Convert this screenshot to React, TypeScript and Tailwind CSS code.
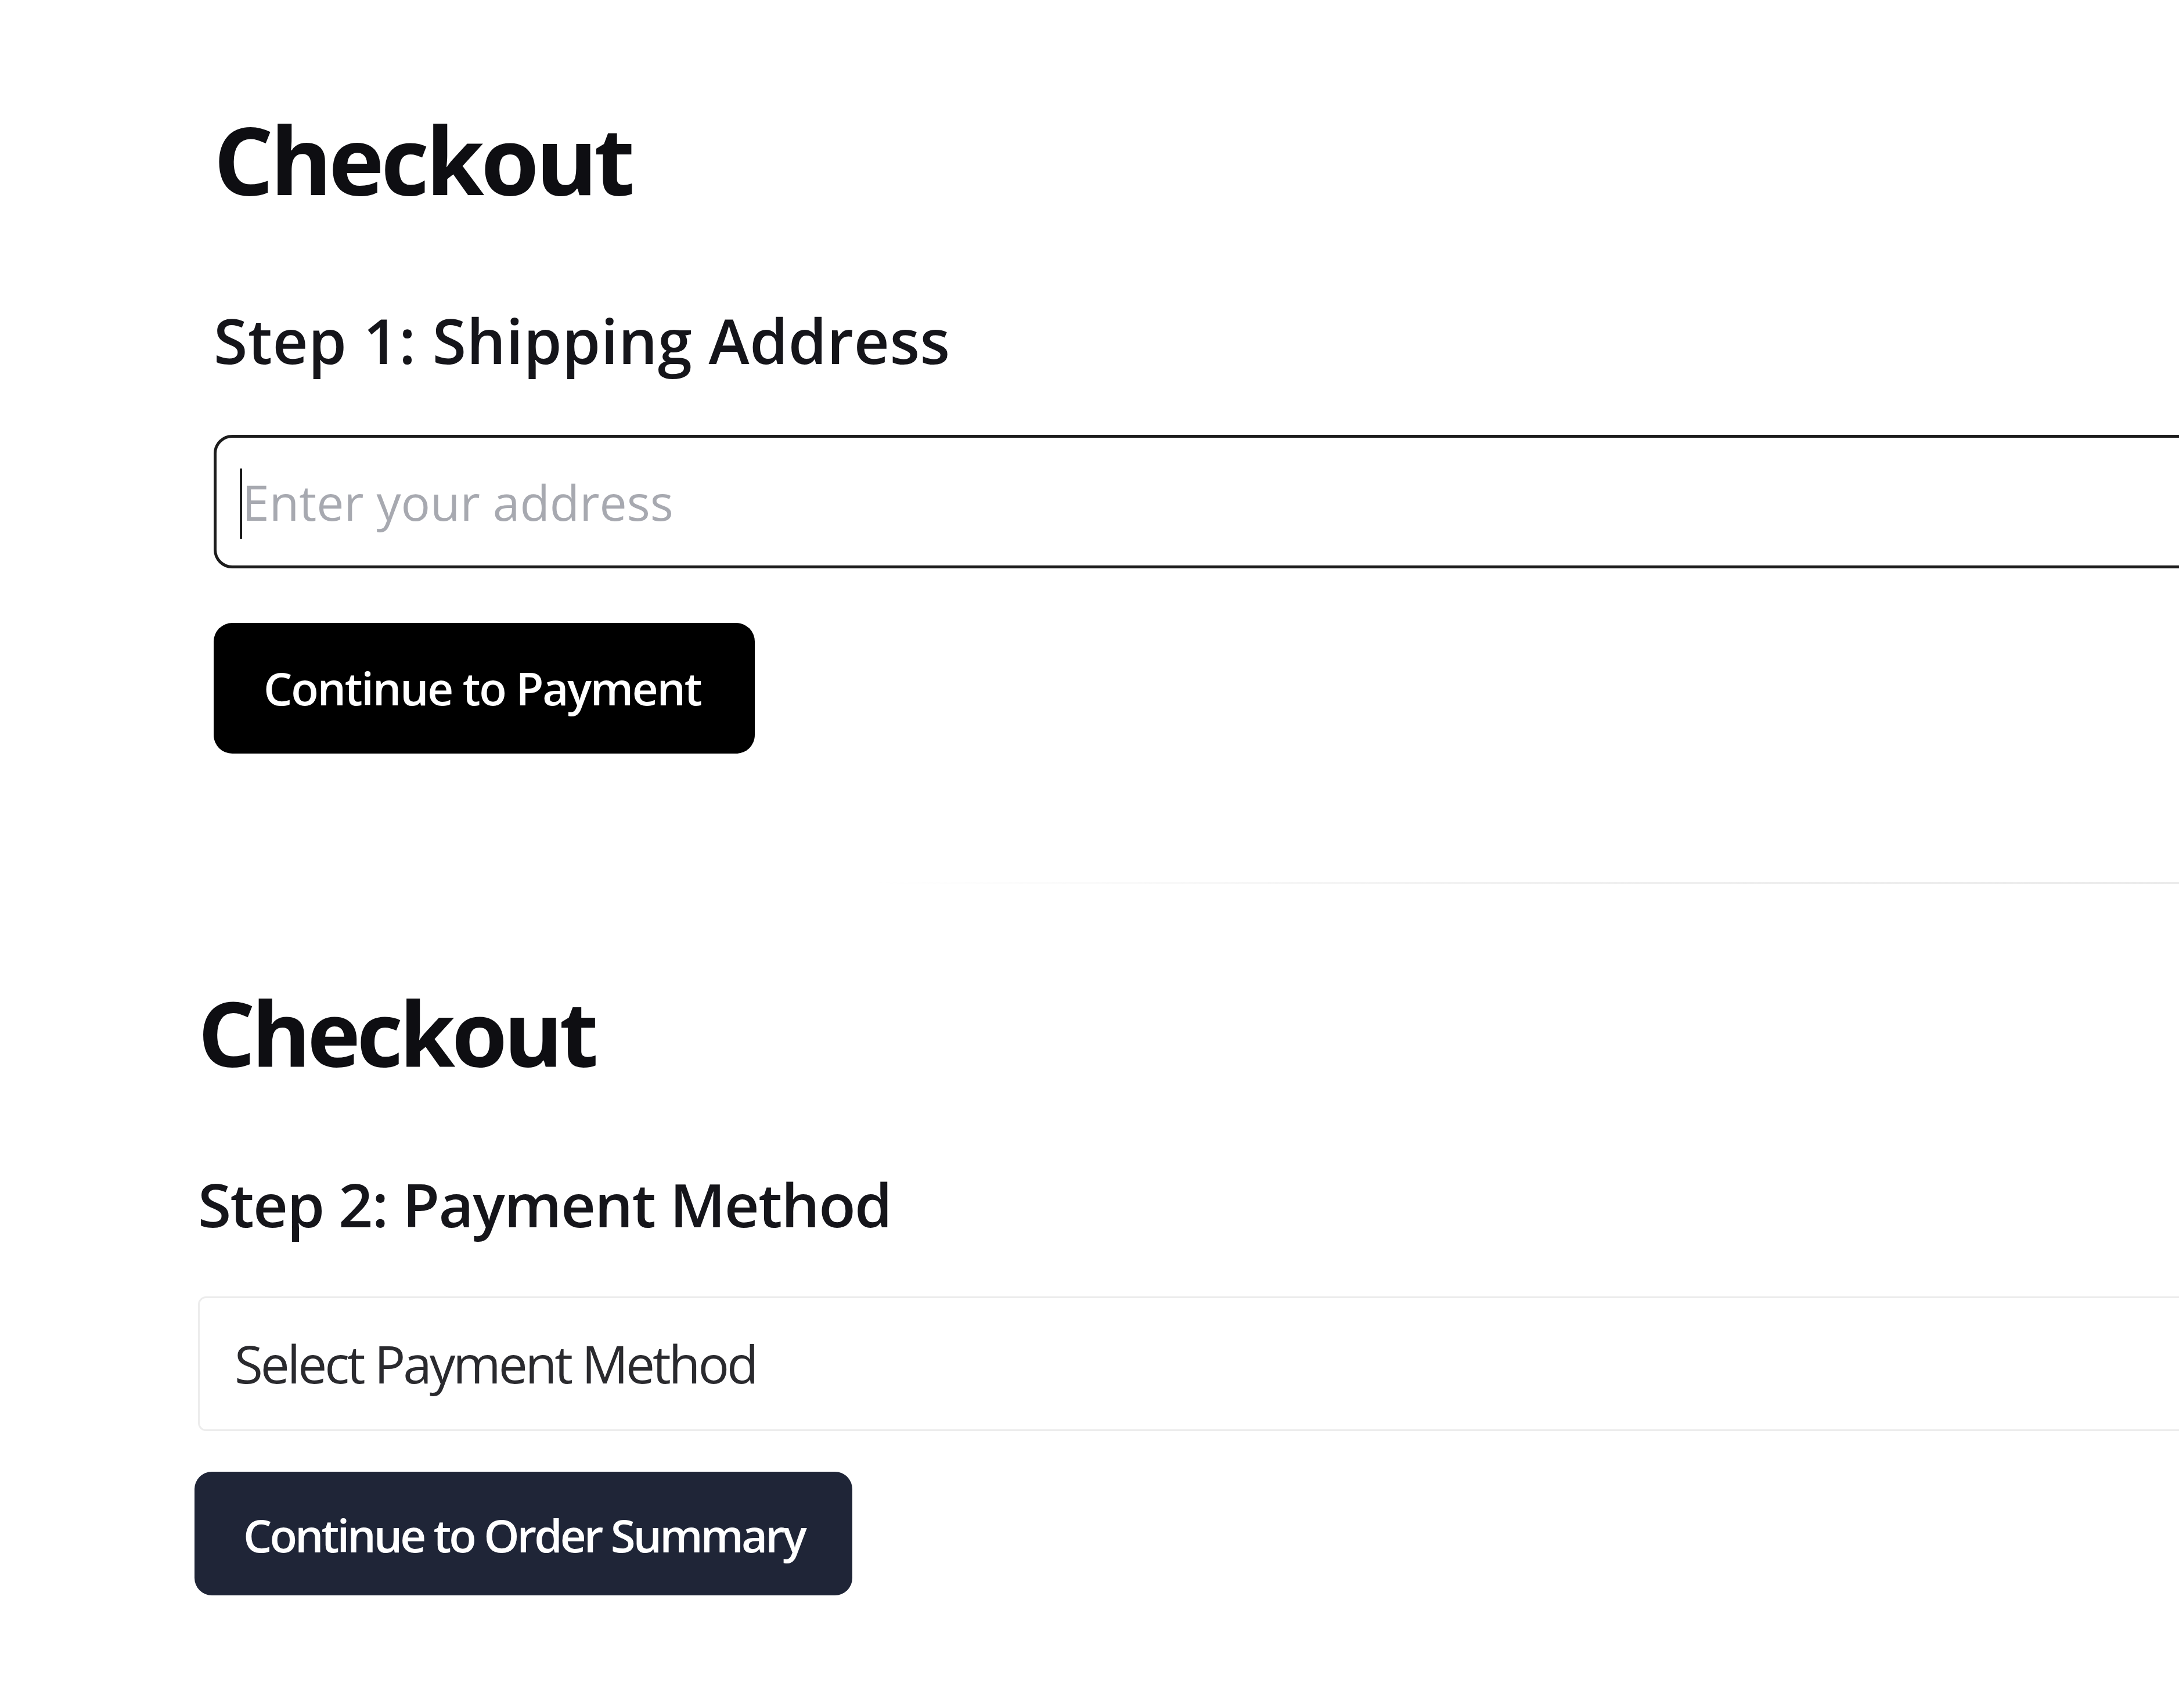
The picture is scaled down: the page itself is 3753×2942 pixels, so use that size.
export default function App() {
  return (
    <div
      className="relative w-full h-[2942px] overflow-hidden bg-white"
      style={{ fontFamily: '"Open Sans", "Noto Sans", sans-serif' }}>
      <div className="flex flex-col pl-[368px] pt-[192px]">
        <h1 className="text-[162px] leading-none font-bold tracking-[-5.8px] text-[#0e0e12]">
          Checkout
        </h1>
        <h2 className="mt-[179px] text-[106px] leading-none font-semibold tracking-[0.6px] text-[#15151a]">
          Step 1: Shipping Address
        </h2>
        <div className="relative mt-[110px] w-[3600px]">
          <input
            type="text"
            placeholder="Enter your address"
            className="w-full h-[230px] border-[5px] border-[#1c1c1c] rounded-[32px] pl-[44px] text-[84px] text-[#222] placeholder:text-[#a7a9b0] outline-none"
          />
          <span className="absolute left-[45px] top-[58px] w-[4px] h-[121px] bg-[#1a1a1a]"></span>
        </div>
        <button className="mt-[94px] w-[932px] h-[225px] flex items-center pl-[86px] bg-black text-white text-[78px] font-semibold tracking-[-2.3px] whitespace-nowrap rounded-[32px]">
          Continue to Payment
        </button>
      </div>

      <div className="mt-[221px] ml-[1500px] h-[4px] bg-gradient-to-r from-white via-[#f0f0f0] to-[#ebebeb]"></div>

      <div className="flex flex-col pl-[341px] mt-[176px]">
        <h1 className="text-[155px] leading-none font-bold tracking-[-6.2px] text-[#0e0e12]">
          Checkout
        </h1>
        <h2 className="mt-[168px] text-[104px] leading-none font-semibold tracking-[-1.6px] text-[#15151a]">
          Step 2: Payment Method
        </h2>
        <div className="mt-[107px] w-[3600px] h-[232px] flex items-center border-[3px] border-[#ececec] rounded-[14px] pl-[60px] text-[89px] tracking-[-4px] text-[#2a2a2e]">
          Select Payment Method
        </div>
        <button className="mt-[70px] -ml-[6px] w-[1133px] h-[213px] flex items-center pl-[84px] pt-[6px] bg-[#1f2537] text-white text-[78px] font-semibold tracking-[-4px] whitespace-nowrap rounded-[30px]">
          Continue to Order Summary
        </button>
      </div>
    </div>
  );
}
